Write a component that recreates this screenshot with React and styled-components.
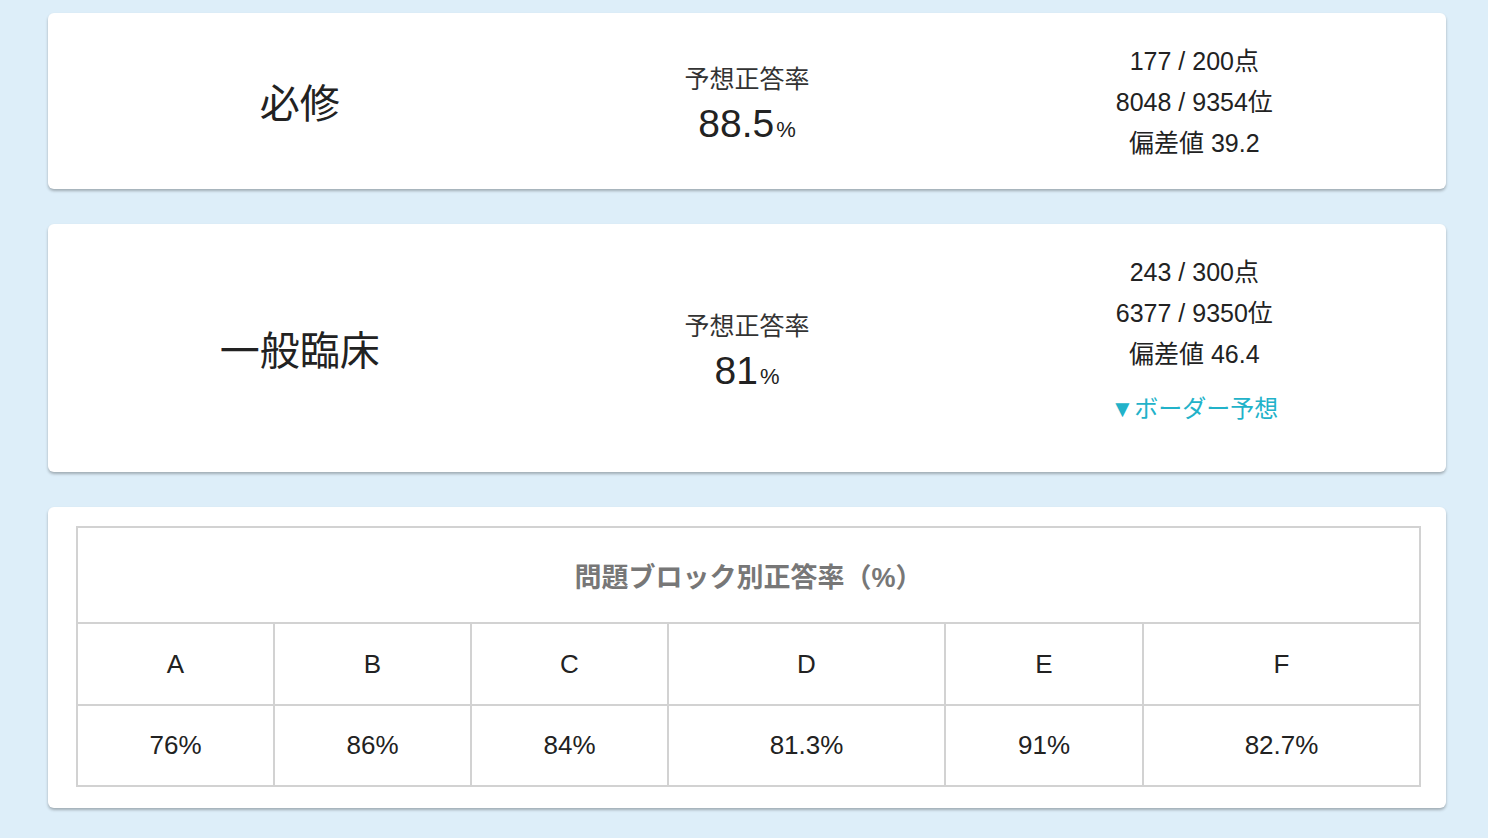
import styled, { createGlobalStyle } from "styled-components";

const GlobalStyle = createGlobalStyle`
  body {
    margin: 0;
    background-color: #ddeef9;
    font-family: "Liberation Sans", "Noto Sans CJK JP", sans-serif;
    color: #222222;
  }
`;

const Page = styled.div`
  display: flex;
  flex-direction: column;
  gap: 35px;
  padding: 13px 42px 30px 48px;
  min-height: 838px;
  box-sizing: border-box;
`;

const Card = styled.div`
  background-color: #ffffff;
  border-radius: 6px;
  box-shadow: 0 2px 3px rgba(0, 0, 0, 0.28);
  padding: ${(p) => p.$pad || "28px 28px 25px"};
`;

const ScoreRow = styled.div`
  display: grid;
  grid-template-columns: 1fr 1fr 1fr;
  align-items: center;
`;

const Subject = styled.div`
  text-align: center;
  font-size: 40px;
  color: #222222;
  margin-top: -3px;
`;

const Rate = styled.div`
  display: flex;
  flex-direction: column;
  align-items: center;
  padding-top: 11px;
`;

const RateLabel = styled.span`
  font-size: 25px;
  line-height: 34px;
  margin-bottom: 3px;
  color: #333333;
`;

const RateValue = styled.span`
  font-size: 39px;
  line-height: 50px;
  color: #222222;
`;

const Percent = styled.span`
  font-size: 22px;
  margin-left: 2px;
`;

const Stats = styled.div`
  display: flex;
  flex-direction: column;
  align-items: center;
`;

const StatLine = styled.span`
  font-size: 25px;
  line-height: 41px;
  color: #222222;
`;

const BorderLink = styled.a`
  font-size: 24px;
  line-height: 40px;
  margin: 14px 0 18px;
  color: #22b2c9;
  text-decoration: none;
  cursor: pointer;
`;

const Table = styled.table`
  width: 100%;
  border-collapse: collapse;
  table-layout: fixed;
  border: 2px solid #d2d2d2;
`;

const Col = styled.col`
  width: ${(p) => p.$w}px;
`;

const Title = styled.th`
  height: 94px;
  padding: 0;
  font-size: 27px;
  font-weight: bold;
  color: #777777;
  border: 2px solid #d2d2d2;
`;

const Cell = styled.td`
  height: ${(p) => p.$h}px;
  padding: 0;
  text-align: center;
  font-size: 26px;
  color: #222222;
  border: 2px solid #d2d2d2;
`;

const scores = [
  {
    name: "必修",
    rate: "88.5",
    lines: ["177 / 200点", "8048 / 9354位", "偏差値 39.2"],
  },
  {
    name: "一般臨床",
    rate: "81",
    lines: ["243 / 300点", "6377 / 9350位", "偏差値 46.4"],
    border: true,
  },
];

const blocks = [
  { id: "A", rate: "76%", w: 197 },
  { id: "B", rate: "86%", w: 197 },
  { id: "C", rate: "84%", w: 197 },
  { id: "D", rate: "81.3%", w: 277 },
  { id: "E", rate: "91%", w: 198 },
  { id: "F", rate: "82.7%", w: 277 },
];

const App = () => {
  return (
    <>
      <GlobalStyle />
      <Page>
        {scores.map((s) => (
          <Card key={s.name}>
            <ScoreRow>
              <Subject>{s.name}</Subject>
              <Rate>
                <RateLabel>予想正答率</RateLabel>
                <RateValue>
                  {s.rate}
                  <Percent>%</Percent>
                </RateValue>
              </Rate>
              <Stats>
                {s.lines.map((line) => (
                  <StatLine key={line}>{line}</StatLine>
                ))}
                {s.border && <BorderLink>▼ボーダー予想</BorderLink>}
              </Stats>
            </ScoreRow>
          </Card>
        ))}
        <Card $pad="19px 27px 21px 28px">
          <Table>
            <colgroup>
              {blocks.map((b) => (
                <Col key={b.id} $w={b.w} />
              ))}
            </colgroup>
            <thead>
              <tr>
                <Title colSpan={6}>問題ブロック別正答率（%）</Title>
              </tr>
            </thead>
            <tbody>
              <tr>
                {blocks.map((b) => (
                  <Cell key={b.id} $h={80}>
                    {b.id}
                  </Cell>
                ))}
              </tr>
              <tr>
                {blocks.map((b) => (
                  <Cell key={b.id} $h={79}>
                    {b.rate}
                  </Cell>
                ))}
              </tr>
            </tbody>
          </Table>
        </Card>
      </Page>
    </>
  );
};

export default App;
